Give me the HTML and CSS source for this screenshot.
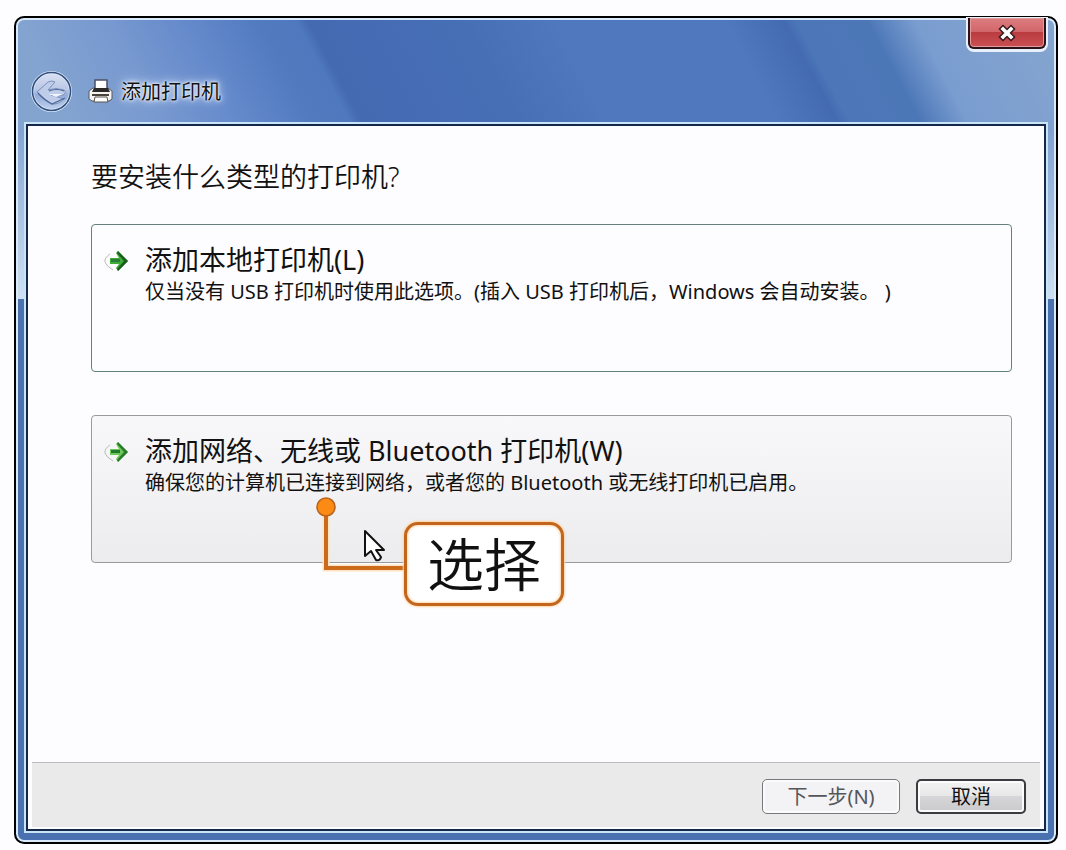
FILE: index.html
```html
<!DOCTYPE html>
<html lang="zh-CN">
  <head>
    <meta charset="UTF-8" />
    <meta name="viewport" content="width=device-width, initial-scale=1.0" />
    <title>添加打印机</title>
    <link rel="stylesheet" href="styles.css">
  </head>
  <body>
    <div class="window">
      <header class="titlebar">
        <div class="titlebar-nav">
          <button class="back-button" aria-label="返回">
            <svg width="41" height="41" viewBox="0 0 41 41">
              <defs>
                <linearGradient id="back-fill" x1="0" y1="0" x2="0" y2="1">
                  <stop offset="0" stop-color="#dbe2f3" />
                  <stop offset="0.45" stop-color="#b9c7e6" />
                  <stop offset="0.6" stop-color="#93abd8" />
                  <stop offset="1" stop-color="#c3d4f0" />
                </linearGradient>
              </defs>
              <circle cx="20.500" cy="20.500" r="19" fill="url(#back-fill)" stroke="#e3ecfa" stroke-width="3" />
              <circle cx="20.500" cy="20.500" r="19" fill="none" stroke="#30507f" stroke-width="1.600" />
              <path d="M6 21 17 11q4-2 7 0L17 19q8-3 16 0 3 3-1 5H20l13 4q-6 6-13 5Q12 27 6 21Z" fill="#c0cdea" stroke="#7c90b8" stroke-width="1" stroke-linejoin="round" />
              <path d="M7 22q6 7 14 11l13-6M18 20q8-3 15 0" fill="none" stroke="#4b6797" stroke-width="1.200" />
              <path d="M18 23h14l-7 3Z" fill="#f0f4fc" />
            </svg>
          </button>
          <svg class="printer" width="25" height="25" viewBox="0 0 25 25">
            <path d="M1 12l4-3h15l4 3v8l-3 2H4l-3-2Z" fill="#f5f3f0" stroke="#56585f" />
            <path d="M7 10V1h12v9" fill="#fff" stroke="#4a5268" stroke-width="1.500" />
            <path d="M6 9h14l2 4H4Z" fill="#2b2927" />
            <path d="M4 15h17v2H4Z" fill="#4a433d" />
            <path d="M7 18h12l1 5H6Z" fill="#fff" stroke="#5a544e" />
          </svg>
          <span class="titlebar-text">添加打印机</span>
        </div>
        <button class="close-button" aria-label="关闭">
          <svg width="20" height="20" viewBox="0 0 20 20">
            <path d="M6 6l8 8M14 6l-8 8" stroke="#35191e" stroke-width="6.500" stroke-linecap="square" />
            <path d="M6 6l8 8M14 6l-8 8" stroke="#fff" stroke-width="3.600" stroke-linecap="square" />
          </svg>
        </button>
      </header>

      <main class="panel">
        <section class="content">
          <h1>要安装什么类型的打印机?</h1>

          <button class="option">
            <svg class="arrow" width="25" height="22" viewBox="0 0 25 22">
              <path d="M6 4Q0 8 1 12t8 8" fill="none" stroke="#b9bcb9" />
              <path d="M6 8h9l-3-5 2-2 10 10-10 10-2-3 3-4H6Z" fill="#3fae35" />
              <path d="M14 1l10 10-10 10-1-2 7-8-7-8Z" fill="#1a5c1f" />
              <path d="M7 9h9v3H7Z" fill="#2b7d3b" />
            </svg>
            <span class="option-text">
              <span class="option-title">添加本地打印机(L)</span>
              <span class="option-note">仅当没有 USB 打印机时使用此选项。(插入 USB 打印机后，Windows 会自动安装。 )</span>
            </span>
          </button>

          <div class="option-wrap">
            <button class="option option-hover">
              <svg class="arrow" width="25" height="22" viewBox="0 0 25 22">
                <path d="M6 4Q0 8 1 12t8 8" fill="none" stroke="#b9bcb9" />
                <path d="M6 8h9l-3-5 2-2 10 10-10 10-2-3 3-4H6Z" fill="#6cc957" />
                <path d="M14 1l10 10-10 10-1-2 7-8-7-8Z" fill="#2a7a2c" />
                <path d="M7 9h9v3H7Z" fill="#23782f" />
              </svg>
              <span class="option-text">
                <span class="option-title">添加网络、无线或 Bluetooth 打印机(W)</span>
                <span class="option-note">确保您的计算机已连接到网络，或者您的 Bluetooth 或无线打印机已启用。</span>
              </span>
            </button>

            <svg class="callout-line" width="92" height="76" viewBox="0 0 92 76">
              <path d="M11 12V72H92" fill="none" stroke="#ffe3c4" stroke-width="7" />
              <path d="M11 12V72H92" fill="none" stroke="#cc6a1c" stroke-width="4" />
              <circle cx="11" cy="11" r="9" fill="#fb8b14" stroke="#b9631c" stroke-width="1.600" />
            </svg>
            <svg class="cursor" width="23" height="34" viewBox="0 0 23 34">
              <path d="M2 2v25l6-5 5 9q4 1 5-3l-5-7h8Z" fill="#fff" stroke="#111" stroke-width="2" stroke-linejoin="round" />
            </svg>
            <div class="callout">选择</div>
          </div>
        </section>

        <footer class="actions">
          <button class="btn btn-disabled" disabled>下一步(N)</button>
          <button class="btn">取消</button>
        </footer>
      </main>
    </div>
  </body>
</html>
```

FILE: styles.css
```css
* {
  box-sizing: border-box;
}

body {
  margin: 0;
  min-height: 100vh;
  padding: 16px 8px 6px 14px;
  display: flex;
  background-color: #fdfcfe;
  font-family: "Noto Sans", "Noto Sans CJK SC", sans-serif;
  text-spacing-trim: space-all;
  color: #111;
}

button {
  font-family: inherit;
  color: inherit;
  margin: 0;
  padding: 0;
  cursor: pointer;
}

svg {
  display: block;
}

.window {
  flex: 1;
  display: flex;
  flex-direction: column;
  padding: 0 10px 11px;
  border: 2px solid #000;
  border-radius: 10px;
  box-shadow: inset 0 0 0 2px #d9ebfa;
  background:
    linear-gradient(rgba(210, 230, 245, 0) 40%, rgba(215, 232, 246, 0.9)) top / 100% 281px no-repeat,
    linear-gradient(62deg, #84a4d0 12%, #7899d0 20%, #6489cb 27%, #517abf 33%, #4f78be 36%, #446ab2 37%, #476fb6 50%, #5078be 58%, #4f78be 72%, #446bb2 77%, #4c76b8 78%, #4c77b7 84%, #7a9dd0 88%, #86a5cf 100%) top / 100% 281px no-repeat,
    #4a71b0;
}

.titlebar {
  display: flex;
  justify-content: space-between;
  align-items: flex-start;
  height: 106px;
}

.titlebar-nav {
  display: flex;
  align-items: center;
  padding: 53px 0 0 5px;
}

.back-button {
  border: none;
  border-radius: 50%;
  background: none;
}

.printer {
  margin: 0 8px 0 16px;
}

.titlebar-text {
  font-size: 20px;
  line-height: 28px;
  text-shadow: 0 0 2px #fff, 0 0 4px #fff, 0 0 8px #dce9ff, 0 0 14px #b9d0f5;
}

.close-button {
  display: flex;
  justify-content: center;
  align-items: center;
  width: 78px;
  height: 31px;
  border: 2px solid #2a1218;
  border-top: none;
  border-radius: 0 0 6px 6px;
  box-shadow: 0 1px 0 2px #e8f1fb, inset 0 0 0 1px #e39a9c;
  background: linear-gradient(#dc7d80, #d2666a 48%, #b83c40 50%, #cb5053);
}

.panel {
  flex: 1;
  display: flex;
  flex-direction: column;
  border: 2px solid #14294a;
  box-shadow: 0 0 0 2px #c9e3f7;
  background-color: #fdfcfe;
}

.content {
  flex: 1;
  padding: 31px 32px 32px 63px;
}

h1 {
  margin: 0 0 27px;
  font-size: 27px;
  line-height: 40px;
  font-weight: 350;
}

.option {
  display: flex;
  align-items: flex-start;
  gap: 16px;
  width: 100%;
  height: 148px;
  padding: 17px 12px;
  border: 1px solid #64807f;
  border-radius: 4px;
  background-color: #fdfcfe;
  text-align: left;
}

.option-hover {
  border-color: #9a9a9e;
  background: linear-gradient(#f8f7f9, #f0eff1 70%, #ecebed);
}

.arrow {
  flex: none;
  margin-top: 8px;
}

.option-text {
  display: flex;
  flex-direction: column;
}

.option-title {
  font-size: 27px;
  line-height: 36px;
}

.option-note {
  font-size: 20px;
  line-height: 28px;
}

.option-wrap {
  position: relative;
  margin-top: 43px;
}

/* the callout lies over the second option */
.callout-line {
  position: absolute;
  left: 224px;
  top: 81px;
}

.cursor {
  position: absolute;
  left: 272px;
  top: 114px;
}

.callout {
  position: absolute;
  left: 313px;
  top: 107px;
  width: 160px;
  height: 84px;
  border: 3px solid #c2651d;
  border-radius: 14px;
  box-shadow: 0 0 2px 1px #ffd3a4, inset 0 0 2px 1px #ffd9b0;
  background-color: #fff;
  font-size: 57px;
  line-height: 78px;
  text-align: center;
  font-weight: 350;
}

.actions {
  display: flex;
  justify-content: flex-end;
  gap: 16px;
  margin: 0 4px 2px;
  padding: 16px 14px 13px;
  border-top: 1px solid #bdbcc0;
  background-color: #ebeaeb;
}

.btn {
  width: 110px;
  height: 35px;
  border: 2px solid #3a3c40;
  border-radius: 5px;
  box-shadow: inset 0 0 0 2px #fbfbfb;
  background: linear-gradient(#f3f2f3, #e9e8e9 48%, #d6d5d7 50%, #cac9cb);
  font-size: 20px;
  line-height: 28px;
}

.btn-disabled {
  width: 138px;
  border: 1px solid #77787c;
  background: #f3f2f4;
  color: #55565a;
  cursor: default;
}
```
